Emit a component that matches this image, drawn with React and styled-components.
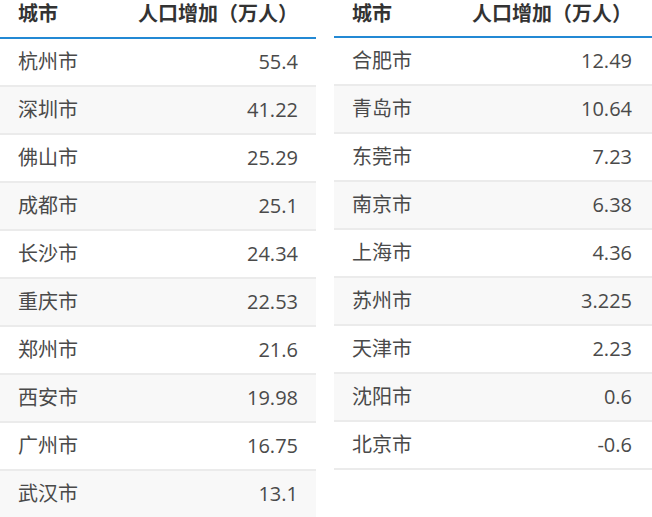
import React from "react";
import styled, { createGlobalStyle } from "styled-components";

const Global = createGlobalStyle`
  html, body { margin: 0; padding: 0; background: #fff; }
  body { font-family: "Open Sans", "Noto Sans CJK SC", sans-serif; overflow: hidden; }
`;

const Page = styled.div`
  display: grid;
  grid-template-columns: 316px 318px;
  column-gap: 18px;
  align-items: start;
  width: 652px;
`;

const Table = styled.table`
  width: 100%;
  border-collapse: collapse;
  table-layout: fixed;
`;

const Th = styled.th`
  width: ${(p) => p.$w || "auto"};
  height: ${(p) => p.$h}px;
  padding: 0 ${(p) => p.$pr}px ${(p) => p.$h - 28}px 18px;
  box-sizing: border-box;
  font-size: 20px;
  line-height: 28px;
  font-weight: 700;
  color: #333;
  text-align: ${(p) => (p.$right ? "right" : "left")};
  border-bottom: 2px solid #2389d4;
  vertical-align: top;
  white-space: nowrap;
`;

const Tr = styled.tr`
  background: ${(p) => (p.$striped ? "#f8f8f8" : "#fff")};
  border-bottom: 2px solid #ebebeb;
`;

const Td = styled.td`
  height: 46px;
  padding: 0 ${(p) => p.$pr}px 0 18px;
  font-size: 20px;
  line-height: 28px;
  color: #4a4a4a;
  text-align: ${(p) => (p.$right ? "right" : "left")};
  vertical-align: middle;
  white-space: nowrap;
`;

const left = [
  ["杭州市", "55.4"],
  ["深圳市", "41.22"],
  ["佛山市", "25.29"],
  ["成都市", "25.1"],
  ["长沙市", "24.34"],
  ["重庆市", "22.53"],
  ["郑州市", "21.6"],
  ["西安市", "19.98"],
  ["广州市", "16.75"],
  ["武汉市", "13.1"],
];

const right = [
  ["合肥市", "12.49"],
  ["青岛市", "10.64"],
  ["东莞市", "7.23"],
  ["南京市", "6.38"],
  ["上海市", "4.36"],
  ["苏州市", "3.225"],
  ["天津市", "2.23"],
  ["沈阳市", "0.6"],
  ["北京市", "-0.6"],
];

function CityTable({ rows, headH = 37, pr = 18 }) {
  return (
    <Table>
      <thead>
        <tr>
          <Th $w="120px" $h={headH} $pr={18}>城市</Th>
          <Th $right $h={headH} $pr={pr}>人口增加（万人）</Th>
        </tr>
      </thead>
      <tbody>
        {rows.map(([c, v], i) => (
          <Tr key={c} $striped={i % 2 === 1}>
            <Td $pr={18}>{c}</Td>
            <Td $right $pr={pr}>{v}</Td>
          </Tr>
        ))}
      </tbody>
    </Table>
  );
}

export default function App() {
  return (
    <>
      <Global />
      <Page>
        <CityTable rows={left} headH={37} pr={18} />
        <CityTable rows={right} headH={36} pr={20} />
      </Page>
    </>
  );
}
